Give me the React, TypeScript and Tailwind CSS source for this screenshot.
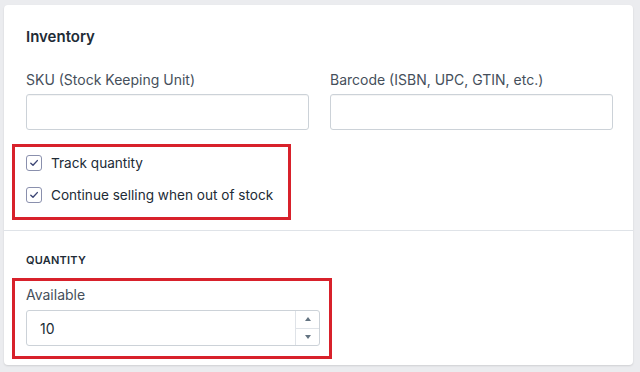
import React from 'react';

function CheckBox() {
  return (
    <span className="flex h-[16px] w-[16px] items-center justify-center rounded-[3px] border border-[#8a90ad] bg-white">
      <svg width="10" height="10" viewBox="0 0 10 10" fill="none">
        <path d="M1.8 5.2 L4 7.3 L8.3 2.6" stroke="#3d4675" strokeWidth="1.4" strokeLinecap="round" strokeLinejoin="round" />
      </svg>
    </span>
  );
}

function TextField({ label }: { label: string }) {
  return (
    <div className="flex flex-col">
      <label className="h-[20px] text-[14px] leading-[20px] text-[#454f5b]">{label}</label>
      <div className="mt-[4px] h-[36px] rounded-[3px] border border-[#ccd2d8] bg-white shadow-[inset_0_1px_0_rgba(0,0,0,0.04)]" />
    </div>
  );
}

export default function App() {
  return (
    <div className="h-[372px] w-[640px] bg-[#ebecef] pl-[4px] pt-[5px] font-['Inter','Liberation_Sans',sans-serif]">
      <div className="h-[360px] w-[629px] rounded-[4px] bg-white shadow-[0_1px_2px_rgba(0,0,0,0.12)]">
        {/* INVENTORY */}
        <section className="pl-[22px] pr-[20px] pt-[22px]">
          <h2 className="h-[20px] text-[15px] font-semibold leading-[20px] text-[#212b36]">Inventory</h2>

          <div className="mt-[23px] grid grid-cols-2 gap-x-[21px]">
            <TextField label="SKU (Stock Keeping Unit)" />
            <TextField label="Barcode (ISBN, UPC, GTIN, etc.)" />
          </div>

          <div className="-ml-[14px] mt-[14px] flex h-[76px] w-[279px] flex-col gap-[16px] border-[3px] border-[#d8212b] pl-[11px] pt-[8px]">
            <label className="flex h-[16px] items-center gap-[9px]">
              <CheckBox />
              <span className="text-[13.6px] leading-[20px] text-[#212b36]">Track quantity</span>
            </label>
            <label className="flex h-[16px] items-center gap-[9px]">
              <CheckBox />
              <span className="text-[13.6px] leading-[20px] text-[#212b36]">Continue selling when out of stock</span>
            </label>
          </div>
        </section>

        <div className="mt-[10px] h-px bg-[#dfe3e8]" />

        {/* QUANTITY */}
        <section className="pl-[22px] pr-[20px] pt-[21px]">
          <h3 className="h-[16px] text-[11px] font-semibold uppercase leading-[16px] tracking-[0.02em] text-[#212b36]">Quantity</h3>

          <div className="-ml-[14px] mt-[10px] flex h-[81px] w-[320px] flex-col border-[3px] border-[#d8212b] pl-[11px] pt-[4px]">
            <label className="h-[20px] text-[14px] leading-[20px] text-[#454f5b]">Available</label>
            <div className="mt-[5px] flex h-[36px] w-[294px] rounded-[3px] border border-[#ccd2d8] bg-white">
              <span className="flex flex-1 items-center pl-[13px] text-[14px] text-[#212b36]">10</span>
              <div className="flex w-[24px] flex-col border-l border-[#dfe3e8]">
                <button className="flex flex-1 items-center justify-center border-b border-[#dfe3e8]">
                  <svg width="6" height="4" viewBox="0 0 6 4"><path d="M3 0 L6 4 L0 4 Z" fill="#637381" /></svg>
                </button>
                <button className="flex flex-1 items-center justify-center">
                  <svg width="6" height="4" viewBox="0 0 6 4"><path d="M0 0 L6 0 L3 4 Z" fill="#637381" /></svg>
                </button>
              </div>
            </div>
          </div>
        </section>
      </div>
    </div>
  );
}
